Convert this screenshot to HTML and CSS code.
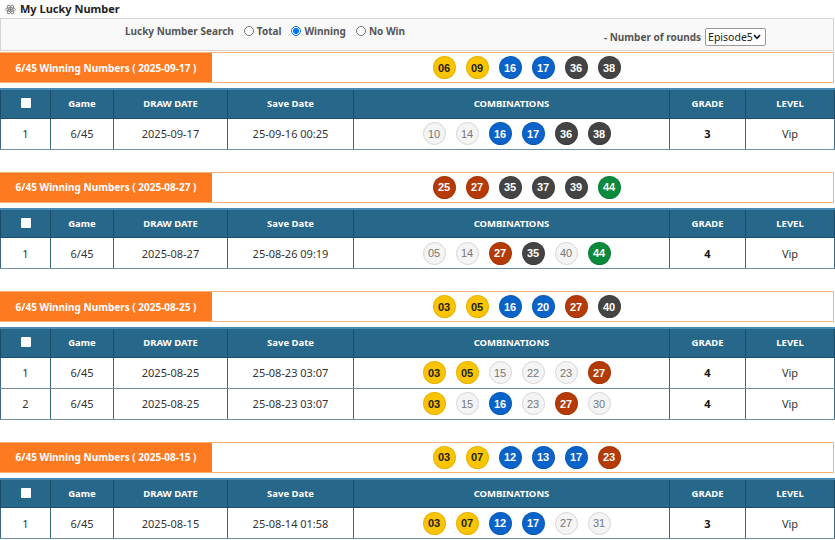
FILE: index.html
```html
<!DOCTYPE html>
<html>
<head>
<meta charset="utf-8">
<link rel="stylesheet" href="styles.css">
</head>
<body>
<div class="page">
  <h1 class="title">
    <svg class="atom" width="11" height="11" viewBox="0 0 22 22" fill="none" stroke="#777" stroke-width="1.6">
      <ellipse cx="11" cy="11" rx="10" ry="4"/>
      <ellipse cx="11" cy="11" rx="10" ry="4" transform="rotate(60 11 11)"/>
      <ellipse cx="11" cy="11" rx="10" ry="4" transform="rotate(120 11 11)"/>
      <circle cx="11" cy="11" r="1.8" fill="#777"/>
    </svg>
    My Lucky Number
  </h1>

  <div class="search">
    <div class="search-left">
      <span class="lbl">Lucky Number Search</span>
      <label class="opt"><input type="radio" name="m"> Total</label>
      <label class="opt"><input type="radio" name="m" checked> Winning</label>
      <label class="opt"><input type="radio" name="m"> No Win</label>
    </div>
    <div class="search-right">
      <span class="lbl">- Number of rounds</span>
      <span class="sel-wrap">
        <select class="sel"><option>Episode5</option></select>
        <svg class="chev" width="8" height="6" viewBox="0 0 8 6"><path d="M1 1.2 L4 4.3 L7 1.2" fill="none" stroke="#222" stroke-width="1.8"/></svg>
      </span>
    </div>
  </div>

  <section class="draw">
    <div class="win">
      <div class="win-label">6/45 Winning Numbers ( 2025-09-17 )</div>
      <div class="balls win-balls">
        <span class="ball y">06</span><span class="ball y">09</span><span class="ball b">16</span><span class="ball b">17</span><span class="ball d">36</span><span class="ball d">38</span>
      </div>
    </div>
    <table class="grid">
      <colgroup><col class="c1"><col class="c2"><col class="c3"><col class="c4"><col class="c5"><col class="c6"><col class="c7"></colgroup>
      <thead><tr><th><span class="chk"></span></th><th>Game</th><th>DRAW DATE</th><th>Save Date</th><th>COMBINATIONS</th><th>GRADE</th><th>LEVEL</th></tr></thead>
      <tbody>
        <tr><td>1</td><td>6/45</td><td>2025-09-17</td><td>25-09-16 00:25</td>
          <td class="combo"><div class="balls"><span class="ball l">10</span><span class="ball l">14</span><span class="ball b">16</span><span class="ball b">17</span><span class="ball d">36</span><span class="ball d">38</span></div></td>
          <td class="grade">3</td><td>Vip</td></tr>
      </tbody>
    </table>
  </section>

  <section class="draw">
    <div class="win">
      <div class="win-label">6/45 Winning Numbers ( 2025-08-27 )</div>
      <div class="balls win-balls">
        <span class="ball r">25</span><span class="ball r">27</span><span class="ball d">35</span><span class="ball d">37</span><span class="ball d">39</span><span class="ball g">44</span>
      </div>
    </div>
    <table class="grid">
      <colgroup><col class="c1"><col class="c2"><col class="c3"><col class="c4"><col class="c5"><col class="c6"><col class="c7"></colgroup>
      <thead><tr><th><span class="chk"></span></th><th>Game</th><th>DRAW DATE</th><th>Save Date</th><th>COMBINATIONS</th><th>GRADE</th><th>LEVEL</th></tr></thead>
      <tbody>
        <tr><td>1</td><td>6/45</td><td>2025-08-27</td><td>25-08-26 09:19</td>
          <td class="combo"><div class="balls"><span class="ball l">05</span><span class="ball l">14</span><span class="ball r">27</span><span class="ball d">35</span><span class="ball l">40</span><span class="ball g">44</span></div></td>
          <td class="grade">4</td><td>Vip</td></tr>
      </tbody>
    </table>
  </section>

  <section class="draw">
    <div class="win">
      <div class="win-label">6/45 Winning Numbers ( 2025-08-25 )</div>
      <div class="balls win-balls">
        <span class="ball y">03</span><span class="ball y">05</span><span class="ball b">16</span><span class="ball b">20</span><span class="ball r">27</span><span class="ball d">40</span>
      </div>
    </div>
    <table class="grid">
      <colgroup><col class="c1"><col class="c2"><col class="c3"><col class="c4"><col class="c5"><col class="c6"><col class="c7"></colgroup>
      <thead><tr><th><span class="chk"></span></th><th>Game</th><th>DRAW DATE</th><th>Save Date</th><th>COMBINATIONS</th><th>GRADE</th><th>LEVEL</th></tr></thead>
      <tbody>
        <tr><td>1</td><td>6/45</td><td>2025-08-25</td><td>25-08-23 03:07</td>
          <td class="combo"><div class="balls"><span class="ball y">03</span><span class="ball y">05</span><span class="ball l">15</span><span class="ball l">22</span><span class="ball l">23</span><span class="ball r">27</span></div></td>
          <td class="grade">4</td><td>Vip</td></tr>
        <tr><td>2</td><td>6/45</td><td>2025-08-25</td><td>25-08-23 03:07</td>
          <td class="combo"><div class="balls"><span class="ball y">03</span><span class="ball l">15</span><span class="ball b">16</span><span class="ball l">23</span><span class="ball r">27</span><span class="ball l">30</span></div></td>
          <td class="grade">4</td><td>Vip</td></tr>
      </tbody>
    </table>
  </section>

  <section class="draw">
    <div class="win">
      <div class="win-label">6/45 Winning Numbers ( 2025-08-15 )</div>
      <div class="balls win-balls">
        <span class="ball y">03</span><span class="ball y">07</span><span class="ball b">12</span><span class="ball b">13</span><span class="ball b">17</span><span class="ball r">23</span>
      </div>
    </div>
    <table class="grid">
      <colgroup><col class="c1"><col class="c2"><col class="c3"><col class="c4"><col class="c5"><col class="c6"><col class="c7"></colgroup>
      <thead><tr><th><span class="chk"></span></th><th>Game</th><th>DRAW DATE</th><th>Save Date</th><th>COMBINATIONS</th><th>GRADE</th><th>LEVEL</th></tr></thead>
      <tbody>
        <tr><td>1</td><td>6/45</td><td>2025-08-15</td><td>25-08-14 01:58</td>
          <td class="combo"><div class="balls"><span class="ball y">03</span><span class="ball y">07</span><span class="ball b">12</span><span class="ball b">17</span><span class="ball l">27</span><span class="ball l">31</span></div></td>
          <td class="grade">3</td><td>Vip</td></tr>
      </tbody>
    </table>
  </section>
</div>
</body>
</html>
```

FILE: styles.css
```css
* { box-sizing: border-box; }
html, body { margin: 0; padding: 0; background: #fff; }
body { font-family: "Noto Sans", "Open Sans", sans-serif; color: #333; }
.page { width: 835px; }

.title {
  margin: 0;
  height: 18px;
  padding-left: 5px;
  display: flex;
  align-items: center;
  gap: 4px;
  font-size: 11px;
  font-weight: 700;
  color: #222;
  line-height: 14px;
}
.atom { flex: none; }

.search {
  width: 834px;
  height: 33px;
  border: 1px solid #d4d4d4;
  background: #f9f9f9;
  display: grid;
  grid-template-columns: 528px 1fr;
  margin-bottom: 1px;
}
.search-left, .search-right {
  display: flex;
  align-items: center;
  justify-content: center;
  font-size: 10px;
  font-weight: 700;
  color: #555;
}
.search-left { align-self: start; padding-top: 5px; gap: 10px; }
.search-right { align-self: end; padding-bottom: 4px; gap: 4px; padding-left: 8px; }
.opt { display: flex; align-items: center; gap: 2px; }
.opt input { width: 10px; height: 10px; margin: 0 1px 0 0; }

.sel-wrap {
  display: inline-flex;
  align-items: center;
  width: 61px;
  height: 18px;
  background: #fff;
  border: 1px solid #999;
  border-radius: 2px;
  padding: 0 4px 0 2px;
}
.sel {
  -webkit-appearance: none;
  appearance: none;
  flex: 1;
  min-width: 0;
  font-family: "Noto Sans", sans-serif;
  font-size: 10.5px;
  font-weight: 400;
  height: 16px;
  padding: 0;
  margin: 0;
  color: #222;
  background: transparent;
  border: none;
  outline: none;
}
.chev { flex: none; }

.draw { margin: 0 0 22px 0; }

.win {
  width: 834px;
  height: 31px;
  border: 1px solid #f8b27a;
  display: flex;
}
.win-label {
  width: 212px;
  background: #fd7a21;
  color: #fff;
  font-size: 10px;
  font-weight: 700;
  display: flex;
  align-items: center;
  justify-content: center;
  margin: 0 0 0 -1px;
}
.win-balls { flex: 1; padding-left: 8px; }

.balls {
  display: flex;
  align-items: center;
  justify-content: center;
  gap: 10px;
}
.ball {
  width: 23px;
  height: 23px;
  border-radius: 50%;
  display: inline-flex;
  align-items: center;
  justify-content: center;
  font-family: "Liberation Sans", Arial, sans-serif;
  font-size: 11px;
  font-weight: 700;
  color: #fff;
  border: 1px solid rgba(0,0,0,0.08);
}
.ball.y { background: #fbc400; color: #222; }
.ball.b { background: #0a63c8; }
.ball.d { background: #444; }
.ball.r { background: #b53a06; }
.ball.g { background: #0a8a3b; }
.ball.l { background: #f4f4f4; color: #777; font-weight: 400; border: 1px solid #d6d6d6; }

.grid {
  width: 834px;
  margin-top: 5px;
  border-collapse: collapse;
  table-layout: fixed;
  font-size: 11px;
}
.c1 { width: 50px; }
.c2 { width: 63px; }
.c3 { width: 114px; }
.c4 { width: 126px; }
.c5 { width: 316px; }
.c6 { width: 76px; }
.c7 { width: 89px; }

.grid th {
  height: 29px;
  background: #27678a;
  color: #fff;
  font-size: 9.5px;
  font-weight: 700;
  border-top: 2px solid #4a8bb3;
  border-left: 1px solid #1c4c6a;
  border-right: 1px solid #1c4c6a;
  border-bottom: 1px solid #1e4e6b;
  padding: 0;
}
.grid td {
  height: 31px;
  text-align: center;
  color: #333;
  border: 1px solid #3b6783;
  border-top: none;
  padding: 0;
}
.grid tbody tr td { border-bottom: 1px solid #6f8ea3; }
.grid td.combo { padding-left: 10px; }
.grid td.grade { font-weight: 700; color: #111; }

.chk {
  display: inline-block;
  width: 10px;
  height: 10px;
  background: #fff;
  border-radius: 1px;
  vertical-align: middle;
  margin-top: -3px;
}
```
